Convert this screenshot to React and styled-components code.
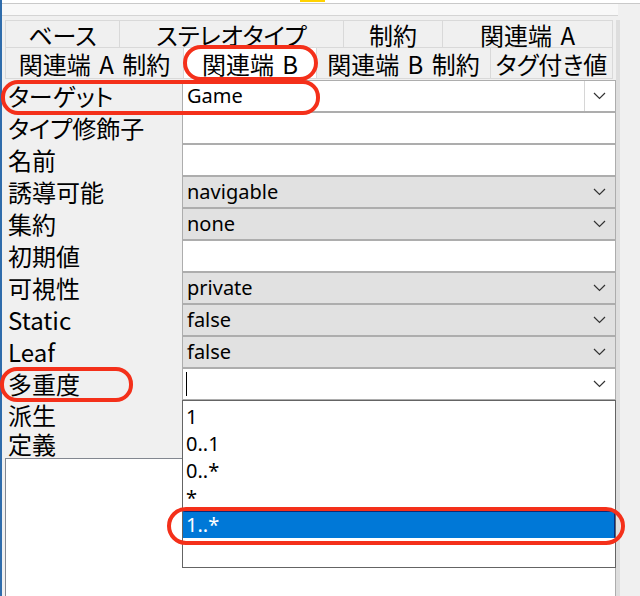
import React from 'react';
import styled, { createGlobalStyle } from 'styled-components';

const CJK = `"Noto Sans CJK JP", "Noto Sans", sans-serif`;
const LATIN = `"Noto Sans", "Noto Sans CJK JP", sans-serif`;

const GlobalStyle = createGlobalStyle`
  html, body {
    margin: 0;
    padding: 0;
    background: #f0f0f0;
    overflow: hidden;
  }
`;

const Window = styled.div`
  position: relative;
  width: 640px;
  height: 596px;
  display: flex;
  background: #f0f0f0;
  overflow: hidden;
`;

const Accent = styled.div`
  flex: none;
  width: 2px;
  background: #2f6cab;
`;

const Main = styled.div`
  flex: 1;
  display: flex;
  flex-direction: column;
  min-width: 0;
`;

const TopBar = styled.div`
  width: 613px;
  height: 3px;
  background: #fff;
  border-bottom: 1px solid #c9c9c9;
  padding-left: 298px;
  box-sizing: content-box;
`;

const YellowMark = styled.div`
  width: 25px;
  height: 2px;
  background: #ffd200;
`;

const Toolbar = styled.div`
  width: 616px;
  height: 11px;
  background: #f8f8f8;
  border-bottom: 1px solid #d4d4d4;
`;

const Body = styled.div`
  flex: 1;
  display: flex;
  margin-top: 4px;
  min-height: 0;
`;

const Panel = styled.div`
  flex: none;
  width: 611px;
  margin-left: 3px;
  display: flex;
  flex-direction: column;
`;

const Gutter = styled.div`
  flex: none;
  width: 4px;
  background: #dedede;
`;

/* ---------- tabs ---------- */

const TabStrip = styled.div`
  margin-right: 3px;
  margin-bottom: 1px;
  border-top: 1px solid #d9d9d9;
`;

const TabRow = styled.div`
  display: flex;
  height: ${p => p.$h}px;
  border-left: 1px solid #d9d9d9;
  border-bottom: 1px solid #d9d9d9;
`;

const Tab = styled.div`
  flex: ${p => (p.$grow ? '1 1 0' : `0 0 ${p.$w}px`)};
  box-sizing: border-box;
  display: flex;
  align-items: center;
  justify-content: center;
  border-right: 1px solid #d9d9d9;
  background: ${p => (p.$active ? '#ffffff' : '#f0f0f0')};
  font-family: ${CJK};
  font-size: 24px;
  line-height: 1;
  font-feature-settings: "palt";
  word-spacing: 3px;
  color: #000;
  white-space: nowrap;
  padding-top: 1px;
`;

/* ---------- property grid ---------- */

const Row = styled.div`
  position: relative;
  display: grid;
  grid-template-columns: 177px 1fr;
  height: ${p => p.$h || 32}px;
`;

const Label = styled.div`
  display: flex;
  align-items: center;
  padding-left: 3px;
  font-family: ${CJK};
  font-size: 24px;
  line-height: 1;
  font-feature-settings: "palt";
  color: #000;
  white-space: nowrap;
`;

const Cell = styled.div`
  box-sizing: border-box;
  display: flex;
  align-items: center;
  border: 1px solid #adadad;
  background: ${p => (p.$combo ? '#e1e1e1' : '#ffffff')};
  font-family: ${LATIN};
  font-size: 20px;
  line-height: 1;
  color: #000;
  padding-left: 4px;
`;

const CellText = styled.span`
  flex: 1;
  white-space: nowrap;
`;

const DropButton = styled.div`
  align-self: stretch;
  width: 29px;
  display: flex;
  align-items: center;
  justify-content: center;
  border-left: 1px solid #d6d6d6;
  background: #fff;
  margin-right: 1px;
`;

const ChevronSlot = styled.div`
  width: 24px;
  display: flex;
  align-items: center;
  justify-content: center;
  margin-right: 4px;
`;

const Caret = styled.div`
  width: 1px;
  height: 24px;
  background: #000;
  margin-left: -1px;
`;

const DefinitionBox = styled.div`
  flex: 1;
  background: #fff;
  border-top: 1px solid #828790;
  border-left: 1px solid #828790;
  border-right: 1px solid #adadad;
`;

/* ---------- dropdown popup ---------- */

const DropList = styled.ul`
  position: absolute;
  top: 100%;
  left: 177px;
  width: 434px;
  height: 168px;
  box-sizing: border-box;
  margin: 0;
  padding: 2px 0 0;
  list-style: none;
  background: #fff;
  border: 1px solid #646464;
  z-index: 2;
`;

const Item = styled.li`
  height: 27px;
  box-sizing: border-box;
  display: flex;
  align-items: center;
  padding-left: 2px;
  font-family: ${LATIN};
  font-size: 20px;
  line-height: 1;
  color: ${p => (p.$selected ? '#ffffff' : '#000')};
  background: ${p => (p.$selected ? '#0078d7' : 'transparent')};
  border: 1px solid ${p => (p.$selected ? '#0a2a7a' : 'transparent')};
  border-left-color: transparent;
  border-bottom-color: transparent;
`;

/* ---------- annotations ---------- */

const Mark = styled.div`
  position: absolute;
  left: ${p => p.$x}px;
  top: ${p => p.$y}px;
  width: ${p => p.$w}px;
  height: ${p => p.$h}px;
  box-sizing: border-box;
  border: 4px solid #f4301a;
  border-radius: ${p => p.$r}px;
  pointer-events: none;
  z-index: 5;
`;

const Chevron = () => (
  <svg width="13" height="8" viewBox="0 0 13 8">
    <polyline points="1,1 6.5,6.5 12,1" fill="none" stroke="#333" strokeWidth="1.2" />
  </svg>
);

const tabRows = [
  [
    { t: 'ベース', w: 114 },
    { t: 'ステレオタイプ', w: 224 },
    { t: '制約', w: 99 },
    { t: '関連端 A', grow: true },
  ],
  [
    { t: '関連端 A 制約', w: 178 },
    { t: '関連端 B', w: 133, active: true },
    { t: '関連端 B 制約', w: 174 },
    { t: 'タグ付き値', grow: true },
  ],
];

const props = [
  { label: 'ターゲット', kind: 'target', value: 'Game' },
  { label: 'タイプ修飾子', kind: 'text' },
  { label: '名前', kind: 'text' },
  { label: '誘導可能', kind: 'combo', value: 'navigable' },
  { label: '集約', kind: 'combo', value: 'none' },
  { label: '初期値', kind: 'text' },
  { label: '可視性', kind: 'combo', value: 'private' },
  { label: 'Static', kind: 'combo', value: 'false' },
  { label: 'Leaf', kind: 'combo', value: 'false' },
];

const multiplicities = ['1', '0..1', '0..*', '*', '1..*'];

const ValueCell = ({ kind, value }) => {
  if (kind === 'target') {
    return (
      <Cell>
        <CellText>{value}</CellText>
        <DropButton><Chevron /></DropButton>
      </Cell>
    );
  }
  if (kind === 'combo') {
    return (
      <Cell $combo>
        <CellText>{value}</CellText>
        <ChevronSlot><Chevron /></ChevronSlot>
      </Cell>
    );
  }
  return <Cell />;
};

export default function App() {
  return (
    <>
      <GlobalStyle />
      <Window>
        <Accent />
        <Main>
          <TopBar><YellowMark /></TopBar>
          <Toolbar />
          <Body>
            <Panel>
              <TabStrip>
                {tabRows.map((row, i) => (
                  <TabRow key={i} $h={i === 0 ? 26 : 30}>
                    {row.map(tab => (
                      <Tab key={tab.t} $w={tab.w} $grow={tab.grow} $active={tab.active}>
                        {tab.t}
                      </Tab>
                    ))}
                  </TabRow>
                ))}
              </TabStrip>

              {props.map(p => (
                <Row key={p.label}>
                  <Label>{p.label}</Label>
                  <ValueCell kind={p.kind} value={p.value} />
                </Row>
              ))}

              <Row>
                <Label>多重度</Label>
                <Cell>
                  <Caret />
                  <CellText />
                  <ChevronSlot><Chevron /></ChevronSlot>
                </Cell>
                <DropList>
                  {multiplicities.map(m => (
                    <Item key={m} $selected={m === '1..*'}>{m}</Item>
                  ))}
                </DropList>
              </Row>

              <Row $h={30}>
                <Label>派生</Label>
                <Cell $combo />
              </Row>
              <Row $h={28}>
                <Label>定義</Label>
              </Row>
              <DefinitionBox />
            </Panel>
            <Gutter />
          </Body>
        </Main>

        <Mark $x={183} $y={45} $w={135} $h={36} $r={18} />
        <Mark $x={1} $y={80} $w={319} $h={35} $r={17} />
        <Mark $x={0} $y={367} $w={133} $h={35} $r={17} />
        <Mark $x={167} $y={507} $w={458} $h={38} $r={19} />
      </Window>
    </>
  );
}
